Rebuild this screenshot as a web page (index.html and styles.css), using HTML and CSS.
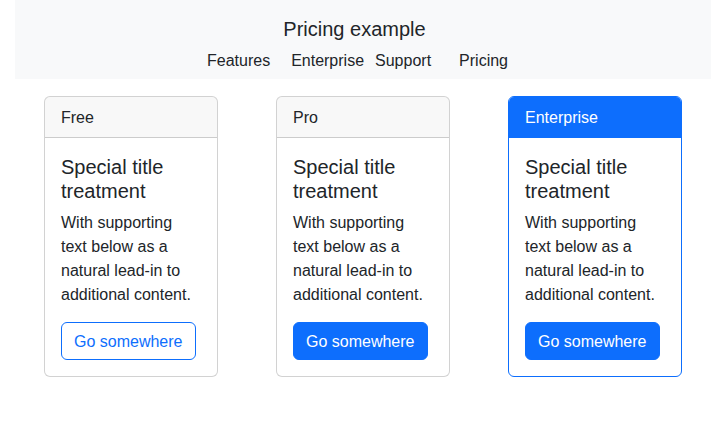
FILE: index.html
```html
<!DOCTYPE html>
<html lang="en">
<head>
<meta charset="utf-8">
<title>Pricing example</title>
<link rel="stylesheet" href="styles.css">
</head>
<body>
<div class="container">
  <header class="masthead">
    <h1 class="brand">Pricing example</h1>
    <nav class="nav">
      <a class="nav-link nav-features" href="#">Features</a>
      <a class="nav-link nav-enterprise" href="#">Enterprise</a>
      <a class="nav-link nav-support" href="#">Support</a>
      <a class="nav-link" href="#">Pricing</a>
    </nav>
  </header>
  <main class="plans">
    <div class="col">
      <div class="card">
        <div class="card-header">Free</div>
        <div class="card-body">
          <h5 class="card-title">Special title treatment</h5>
          <p class="card-text">With supporting text below as a natural lead-in to additional content.</p>
          <a href="#" class="btn btn-outline">Go somewhere</a>
        </div>
      </div>
    </div>
    <div class="col">
      <div class="card">
        <div class="card-header">Pro</div>
        <div class="card-body">
          <h5 class="card-title">Special title treatment</h5>
          <p class="card-text">With supporting text below as a natural lead-in to additional content.</p>
          <a href="#" class="btn btn-primary">Go somewhere</a>
        </div>
      </div>
    </div>
    <div class="col">
      <div class="card card-primary">
        <div class="card-header">Enterprise</div>
        <div class="card-body">
          <h5 class="card-title">Special title treatment</h5>
          <p class="card-text">With supporting text below as a natural lead-in to additional content.</p>
          <a href="#" class="btn btn-primary">Go somewhere</a>
        </div>
      </div>
    </div>
  </main>
</div>
</body>
</html>
```

FILE: styles.css
```css
* { box-sizing: border-box; }

body {
  margin: 0;
  font-family: "Liberation Sans", Arial, sans-serif;
  font-size: 16px;
  line-height: 24px;
  color: #212529;
  background: #fff;
}

.container {
  padding: 0 15px;
}

.masthead {
  background: #f8f9fa;
  padding: 17px 0 6px;
  text-align: center;
}

.brand {
  margin: 0 0 8px;
  padding-right: 17px;
  font-size: 20px;
  font-weight: 400;
  line-height: 24px;
}

.nav {
  display: flex;
  justify-content: center;
  padding-right: 11px;
}

.nav-link {
  color: #212529;
  text-decoration: none;
}

.nav-features { margin-right: 21px; }
.nav-enterprise { margin-right: 11px; }
.nav-support { margin-right: 28px; }

.plans {
  display: grid;
  grid-template-columns: repeat(3, 1fr);
  margin-top: 17px;
}

.col {
  display: flex;
  justify-content: center;
}

.card {
  width: 174px;
  border: 1px solid rgba(0, 0, 0, 0.175);
  border-radius: 6px;
  overflow: hidden;
  background: #fff;
}

.card-header {
  padding: 9px 16px 7px;
  background: rgba(33, 37, 41, 0.03);
  border-bottom: 1px solid rgba(0, 0, 0, 0.175);
}

.card-primary {
  border-color: #0d6efd;
}

.card-primary .card-header {
  background: #0d6efd;
  color: #fff;
  border-bottom-color: #0d6efd;
}

.card-body {
  padding: 17px 16px 16px;
}

.card-title {
  margin: 0 0 8px;
  font-size: 20px;
  font-weight: 400;
  line-height: 24px;
}

.card-text {
  margin: 0 0 15px;
}

.btn {
  display: inline-block;
  padding: 7px 12px 5px;
  border: 1px solid #0d6efd;
  border-radius: 6px;
  text-decoration: none;
  font-size: 16px;
  line-height: 24px;
}

.btn-outline {
  color: #0d6efd;
  background: transparent;
}

.btn-primary {
  color: #fff;
  background: #0d6efd;
}
```
